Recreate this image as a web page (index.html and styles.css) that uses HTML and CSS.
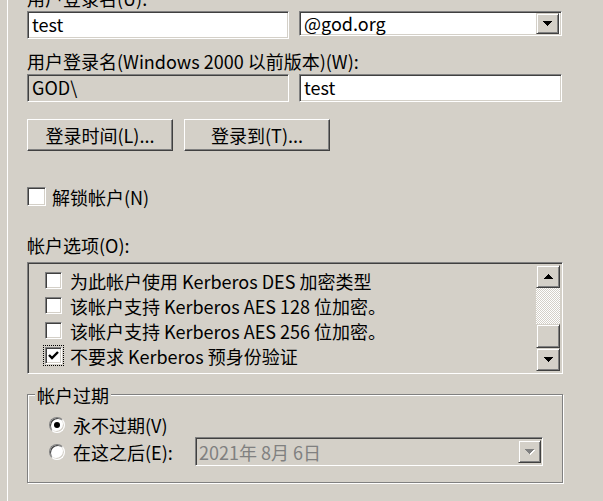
FILE: index.html
```html
<!DOCTYPE html>
<html lang="zh-CN">
<head>
<meta charset="utf-8">
<title>帐户</title>
<link rel="stylesheet" href="styles.css">
</head>
<body>
<div class="page">
  <div class="label label-top">用户登录名(U):</div>
  <div class="row">
    <div class="field">test</div>
    <div class="combo">
      <span>@god.org</span>
      <span class="raised arrow-btn">
        <svg width="9" height="5" viewBox="0 0 9 5"><path d="M0 0h9v1h-1v1h-1v1h-1v1h-1v1h-1v-1h-1v-1h-1v-1h-1v-1h-1z" fill="#000"/></svg>
      </span>
    </div>
  </div>
  <div class="label label-2">用户登录名(Windows 2000 以前版本)(W):</div>
  <div class="row">
    <div class="field disabled">GOD\</div>
    <div class="field wide">test</div>
  </div>
  <div class="btns">
    <div class="btn">登录时间(L)...</div>
    <div class="btn">登录到(T)...</div>
  </div>
  <div class="unlock"><span class="box big"></span>解锁帐户(N)</div>
  <div class="label label-3">帐户选项(O):</div>
  <div class="list">
    <div class="items">
      <div class="item"><span class="box"></span>为此帐户使用 Kerberos DES 加密类型</div>
      <div class="item"><span class="box"></span>该帐户支持 Kerberos AES 128 位加密。</div>
      <div class="item"><span class="box"></span>该帐户支持 Kerberos AES 256 位加密。</div>
      <div class="item"><span class="box checked focus"><svg width="11" height="9" viewBox="0 0 11 9"><path d="M1 4l3 3 6-6" fill="none" stroke="#000" stroke-width="2.4"/></svg></span>不要求 Kerberos 预身份验证</div>
    </div>
    <div class="scroll">
      <div class="raised sb-btn"><svg width="9" height="5" viewBox="0 0 9 5"><path d="M0 5h9v-1h-1v-1h-1v-1h-1v-1h-1v-1h-1v1h-1v1h-1v1h-1v1h-1z" fill="#000"/></svg></div>
      <div class="track"></div>
      <div class="raised thumb"></div>
      <div class="raised sb-btn"><svg width="9" height="5" viewBox="0 0 9 5"><path d="M0 0h9v1h-1v1h-1v1h-1v1h-1v1h-1v-1h-1v-1h-1v-1h-1v-1h-1z" fill="#000"/></svg></div>
    </div>
  </div>
  <div class="group">
    <span class="legend">帐户过期</span>
    <div class="opt"><span class="radio on"></span>永不过期(V)</div>
    <div class="opt opt2">
      <span class="radio"></span>在这之后(E):
      <div class="date">
        <span>2021年 8月 6日</span>
        <span class="raised date-btn">
          <svg width="10" height="6" viewBox="0 0 10 6"><path d="M1 1h9v1h-1v1h-1v1h-1v1h-1v1h-1v-1h-1v-1h-1v-1h-1v-1h-1z" fill="#fff"/><path d="M0 0h9v1h-1v1h-1v1h-1v1h-1v1h-1v-1h-1v-1h-1v-1h-1v-1h-1z" fill="#808080"/></svg>
        </span>
      </div>
    </div>
  </div>
</div>
</body>
</html>
```

FILE: styles.css
```css
* { box-sizing: border-box; }
html, body { margin: 0; height: 100%; }
body {
  background: #d4d0c8;
  font-family: "Noto Sans CJK SC", sans-serif;
  font-size: 18px;
  color: #000;
  overflow: hidden;
}
.page {
  margin-left: 7px;
  border-left: 1px solid #fff;
  height: 501px;
  padding-left: 19px;
  display: flex;
  flex-direction: column;
}
.label { height: 20px; line-height: 20px; white-space: nowrap; }
.label-top { margin-top: -12px; }
.label-2 { margin-top: 12px; }
.label-3 { margin-top: 28px; }
.row { display: flex; gap: 10px; align-items: flex-start; margin-top: 3px; }

.sunken {
}
.field, .combo, .box, .list, .date {
  border: 1px solid;
  border-color: #808080 #fff #fff #808080;
  box-shadow: inset 1px 1px #404040, inset -1px -1px #d4d0c8;
}
.field {
  width: 262px;
  height: 28px;
  background: #fff;
  padding: 0 4px;
  line-height: 25px;
  white-space: nowrap;
}
.field.wide { width: 263px; }
.field.disabled { background: #d4d0c8; }

.combo {
  width: 263px;
  height: 25px;
  background: #fff;
  display: flex;
  align-items: center;
  justify-content: space-between;
  padding: 0 2px 0 4px;
  line-height: 21px;
}
.raised {
  background: #d4d0c8;
  border: 1px solid;
  border-color: #d4d0c8 #404040 #404040 #d4d0c8;
  box-shadow: inset 1px 1px #fff, inset -1px -1px #808080;
}
.arrow-btn {
  width: 23px;
  height: 21px;
  display: flex;
  align-items: center;
  justify-content: center;
}
.arrow-btn svg, .sb-btn svg, .date-btn svg { display: block; }

.btns { display: flex; gap: 11px; margin-top: 17px; }
.btn {
  width: 146px;
  height: 32px;
  border: 1px solid;
  border-color: #fff #404040 #404040 #fff;
  box-shadow: inset -1px -1px #808080;
  display: flex;
  align-items: center;
  justify-content: center;
  line-height: 20px;
}

.unlock {
  margin-top: 35px;
  height: 21px;
  display: flex;
  align-items: center;
  gap: 6px;
  line-height: 20px;
}
.box {
  width: 17px;
  height: 17px;
  background: #fff;
  flex: none;
  display: flex;
  align-items: center;
  justify-content: center;
}
.box.big { width: 19px; height: 19px; }
.box.focus { outline: 1px dotted #000; outline-offset: 1px; }

.list {
  margin-top: 7px;
  width: 536px;
  height: 112px;
  padding: 2px;
  display: flex;
  background: #d4d0c8;
}
.items { flex: 1; padding: 3px 0 0 15px; overflow: hidden; }
.item {
  height: 25px;
  display: flex;
  align-items: center;
  gap: 8px;
  white-space: nowrap;
  line-height: 20px;
}
.scroll { width: 24px; display: flex; flex-direction: column; }
.sb-btn {
  height: 23px;
  display: flex;
  align-items: center;
  justify-content: center;
}
.track {
  flex: 1;
  background: repeating-conic-gradient(#fff 0 25%, #d4d0c8 0 50%) 0 0 / 2px 2px;
}
.thumb { height: 24px; }

.group {
  position: relative;
  margin-top: 20px;
  width: 536px;
  height: 89px;
  border: 1px solid #808080;
  box-shadow: 1px 1px 0 #fff, inset 1px 1px 0 #fff;
  padding: 20px 19px 0 21px;
}
.legend {
  position: absolute;
  top: -10px;
  left: 7px;
  padding: 0 2px;
  background: #d4d0c8;
  line-height: 20px;
}
.opt {
  height: 20px;
  display: flex;
  align-items: center;
  gap: 8px;
  line-height: 20px;
  white-space: nowrap;
}
.opt2 { height: 29px; margin-top: 2px; }
.radio {
  width: 16px;
  height: 16px;
  flex: none;
  border-radius: 50%;
  background: #fff;
  border: 1px solid;
  border-color: #808080 #fff #fff #808080;
  box-shadow: inset 1px 1px #404040, inset -1px -1px #d4d0c8;
  display: flex;
  align-items: center;
  justify-content: center;
}
.radio.on::after {
  content: "";
  width: 6px;
  height: 6px;
  border-radius: 50%;
  background: #000;
}
.date {
  margin-left: auto;
  width: 348px;
  height: 29px;
  background: #d4d0c8;
  color: #808080;
  display: flex;
  align-items: center;
  justify-content: space-between;
  padding: 0 1px 0 3px;
  line-height: 20px;
}
.date-btn {
  width: 23px;
  height: 23px;
  display: flex;
  align-items: center;
  justify-content: center;
}
```
